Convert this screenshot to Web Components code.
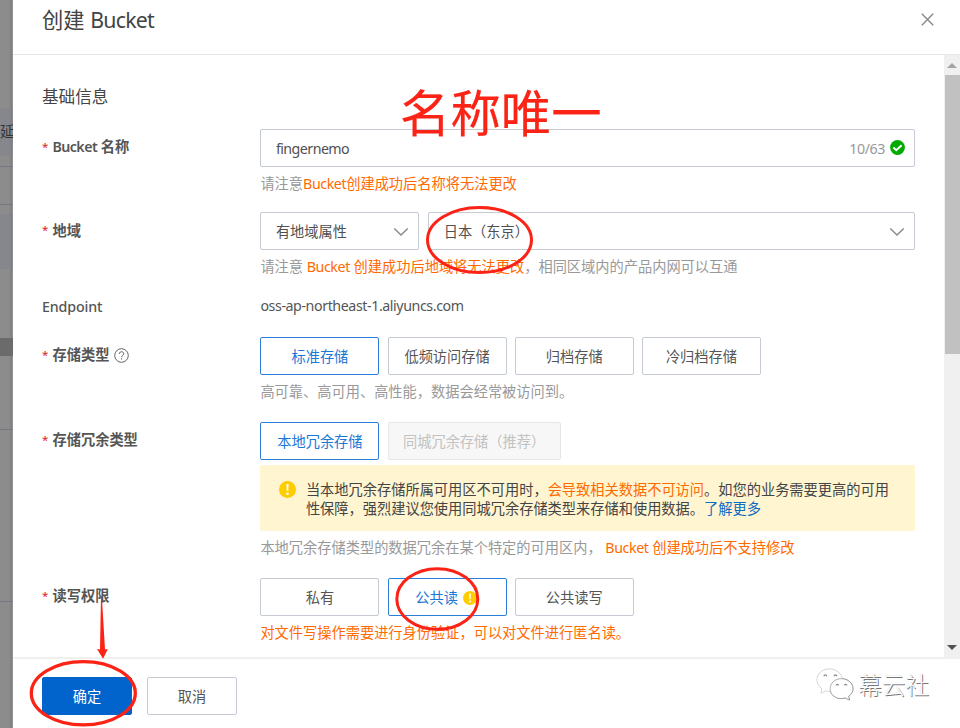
<!DOCTYPE html>
<html lang="zh-CN">
<head>
<meta charset="utf-8">
<title>创建 Bucket</title>
<style>
html,body{margin:0;width:960px;height:728px;overflow:hidden;background:#fff}
body{font:14.23px/20px "Noto Sans","Noto Sans CJK SC",sans-serif;color:#555;--latin:1em;--track:-.029em}
</style>
</head>
<body>
<bucket-page></bucket-page>
<script>
const define=(name,html)=>customElements.define(name,class extends HTMLElement{
  constructor(){super();const t=document.createElement('template');t.innerHTML=html;
    this.attachShadow({mode:'open'}).append(t.content.cloneNode(true));}
});

define('latin-text',`<style>:host{font-size:var(--latin);letter-spacing:var(--track,0)}</style><slot></slot>`);

define('warn-icon',`<style>:host{display:block;width:17px;height:17px}svg{display:block;width:100%;height:100%}</style>
<svg viewBox="0 0 17 17"><circle cx="8.5" cy="8.5" r="8.5" fill="#fc0"/><path d="M7.400 3h2.200l-.3 7H7.700z" fill="#fff"/><circle cx="8.500" cy="12.700" r="1.300" fill="#fff"/></svg>`);

define('form-row',`<style>
:host{display:grid;grid-template-columns:218.400px 654.600px;height:var(--h)}
.label{height:38px;margin-top:-1px;display:flex;align-items:center;font-weight:600;color:#555;white-space:nowrap}
:host([plain]) .label{height:20px;margin-top:1.500px;align-items:flex-start;font-weight:500}
i{display:none;font:400 11.500px/20px "Noto Sans",sans-serif;color:#e02020;width:10.500px}
:host([required]) i{display:block}
.help{display:none;margin-left:5px}
:host([help]) .help{display:block}
.body{display:flex;flex-direction:column}
</style><div class="label"><i>*</i><slot name="label"></slot><svg class="help" width="15" height="15" viewBox="0 0 15 15" fill="none" stroke="#666"><circle cx="7.500" cy="7.500" r="6.800"/><path d="M5.200 6c0-3 4.600-2.900 4.600-.2 0 1.800-2.200 1.600-2.200 3.400"/><path d="M7.600 10.200v1.300"/></svg></div><div class="body"><slot></slot></div>`);

define('button-group',`<style>:host{display:flex;gap:8.200px;height:38px}</style><slot></slot>`);

define('choice-button',`<style>
:host{box-sizing:border-box;display:flex;align-items:center;justify-content:center;width:119px;height:38px;border:1px solid #c5cad3;border-radius:2px;color:#555;padding-top:1px;white-space:nowrap;gap:5px}
:host([selected]){border-color:#2b7fd8;color:#1b78d6}
:host([disabled]){width:173px;background:#f7f7f7;border-color:#e6e6e6;color:#c2c2c2}
:host([dialog]){width:90px}
:host([primary]){background:#0064cc;border-color:#0064cc;color:#fff}
warn-icon{display:none;width:14px;height:14px}
:host([warn]) warn-icon{display:block}
:host([warn]){padding-right:2px}
</style><slot></slot><warn-icon></warn-icon>`);

define('field-box',`<style>
:host{box-sizing:border-box;display:flex;align-items:center;justify-content:space-between;flex:1;height:38px;border:1px solid #c5cad3;border-radius:2px;padding:1px 9px 0 14.500px;white-space:nowrap;color:#505050}
.end{display:flex;align-items:center;gap:5px;color:#999}
</style><span><slot></slot></span><span class="end"><slot name="end"></slot></span>`);

define('chevron-down',`<style>:host{display:block}svg{display:block}</style><svg width="16" height="10" viewBox="0 0 16 10" fill="none" stroke="#888" stroke-width="1.400"><path d="M1.300 1.400 8 8l6.700-6.600"/></svg>`);

define('ok-icon',`<style>:host{display:block;margin-top:-3px}svg{display:block}</style><svg width="15" height="15" viewBox="0 0 15 15"><circle cx="7.500" cy="7.500" r="7.400" fill="#0a0"/><path d="m3.300 7.400 3 2.800 5.300-5" fill="none" stroke="#fff" stroke-width="2"/></svg>`);

define('hint-text',`<style>
:host{display:block;height:20px;margin-top:7px;color:#999;white-space:nowrap}
:host([orange]){color:#ff6a00}
::slotted(b){font-weight:400;color:#ff6a00}
</style><slot></slot>`);

define('notice-box',`<style>
:host{box-sizing:border-box;display:flex;height:66px;margin-top:5px;padding:15px 20px 0 18.500px;background:#fff5d1;border-radius:2px;line-height:19.300px;color:#444;gap:10px}
warn-icon{margin-top:1px;flex:none}
p{margin:0;width:600px;white-space:nowrap}
::slotted(b){font-weight:400;color:#ff6a00}
::slotted(a){color:#0b6cc4}
</style><warn-icon></warn-icon><p><slot></slot></p>`);

define('page-backdrop',`<style>
:host{box-sizing:border-box;display:flex;flex-direction:column;width:13px;height:728px;background:linear-gradient(90deg,#8c8c8c 9px,#7c7c7c 12px,#aaa 13px);overflow:hidden;color:#333}
div{flex:none;box-sizing:border-box}
.band{background:#7e818c80}
.line{height:1px;background:#727780}
</style>
<div style="height:108px"></div><div class="band" style="height:48px;padding:14px 0 0 0;white-space:nowrap;line-height:20px">延</div>
<div style="height:10px"></div><div class="line"></div><div style="height:37px"></div><div class="line"></div><div style="height:9px"></div>
<div class="band" style="height:55px"></div><div style="height:69px"></div><div style="height:18px;background:#6b6b6b"></div><div style="height:73px"></div><div class="line"></div><div style="height:171px"></div><div class="line"></div>`);

define('scroll-bar',`<style>
:host{display:flex;flex-direction:column;width:16px;background:#f0f0f0}
.arrow{height:20px;display:flex;align-items:center;justify-content:center}
.thumb{height:279px;background:#c1c1c1;margin-left:1px}
.space{flex:1}
</style><div class="arrow"><svg width="10" height="5"><path d="M0 5 5 0l5 5z" fill="#a3a3a3"/></svg></div><div class="thumb"></div><div class="space"></div><div class="arrow"><svg width="10" height="5"><path d="M0 0h10L5 5z" fill="#505050"/></svg></div>`);

define('brand-mark',`<style>
:host{display:flex;align-items:center;gap:4px;font:300 23.700px/30px "Noto Sans CJK SC",sans-serif;color:#fff;text-shadow:1px 1px .6px #777,0 0 1px #ccc;white-space:nowrap}
svg{display:block;margin-top:-3px;filter:drop-shadow(.8px .8px .3px #888)}
span{margin-top:-4px}
</style><svg width="38" height="33" viewBox="0 0 39 34" fill="#fff" stroke="#ddd" stroke-width=".4"><path d="M14 1C6.600 1 1 6 1 12.300c0 3.800 2 6.800 5 9L5 26l5-2.700 4 .8c7.400 0 13-5 13-11.500S21 1 14 1Z"/><path d="M26 11c-6.500 0-11.500 4.500-11.500 10.300S19.500 31.500 26 31.500l4-.7 4.500 2.200-1-4c3-2 4.500-4.600 4.500-7.700C38 15.500 32.500 11 26 11Z" stroke="#999" stroke-width=".8"/><path d="M8 8.500c.4-1.800 2.600-1.800 3 0M18.500 8.500c.4-1.800 2.600-1.800 3 0M20.500 18c.4-1.600 2.500-1.600 2.900 0M29 18c.4-1.600 2.500-1.600 2.900 0" fill="none" stroke="#888" stroke-width="1.200"/></svg><span>幕云社</span>`);

define('mark-overlay',`<style>
:host{position:absolute;inset:0;display:block;pointer-events:none;color:#fb2216}
svg{position:absolute;inset:0}
span{position:absolute;left:400px;top:80.500px;font:400 50.400px/60px "Noto Sans CJK SC",sans-serif;white-space:nowrap;-webkit-text-stroke:.2px currentColor}
</style><span>名称唯一</span><svg width="960" height="728" fill="none" stroke="currentColor" stroke-width="3"><ellipse cx="479.500" cy="240" rx="52" ry="32.500"/><ellipse cx="437.300" cy="599" rx="40.500" ry="30.300"/><ellipse cx="83.300" cy="693.200" rx="52" ry="31.600" stroke-width="3.300"/><path d="M101 596h.8L105 649.500l2.800-.5-4.700 9.800L97 649l3 .5z" fill="currentColor" stroke="none"/></svg>`);

define('bucket-page',`<style>
:host{display:flex;position:relative;width:960px;height:728px}
main{flex:1;display:flex;flex-direction:column;background:#fff;min-width:0}
header{box-sizing:border-box;height:55px;border-bottom:1px solid #e6e6e6;display:flex;justify-content:space-between;padding:5px 26px 0 29px;font-size:21.300px;line-height:30px;color:#444}
header svg{margin-top:8px}
header latin-text{--track:-.035em}
.mid{display:flex;height:602px}
.form{flex:1;padding-left:29px}
h3{margin:0;font-weight:400;font-size:16.600px;line-height:24px;padding:30px 0 20px;color:#444}
footer{flex:1;box-sizing:border-box;border-top:2px solid #f0f0f0;display:flex;padding:18px 31px 0 29px;gap:15px}
brand-mark{margin:-6px 0 0 auto;height:30px}
.ep{line-height:20px;padding-top:1px}
</style>
<page-backdrop></page-backdrop>
<main>
<header><span>创建 <latin-text>Bucket</latin-text></span><svg width="13" height="13" viewBox="0 0 13 13" stroke="#888" stroke-width="1.400"><path d="m.8.8 11.400 11.400M12.200.8.8 12.200"/></svg></header>
<div class="mid"><div class="form">
<h3>基础信息</h3>
<form-row required style="--h:83px"><span slot="label"><latin-text style="--track:-.04em">Bucket</latin-text> 名称</span>
<field-box style="flex:none"><latin-text style="--track:-.038em">fingernemo</latin-text><latin-text slot="end">10/63</latin-text><ok-icon slot="end"></ok-icon></field-box>
<hint-text>请注意<b><latin-text>Bucket</latin-text>创建成功后名称将无法更改</b></hint-text></form-row>
<form-row required style="--h:83px"><span slot="label" style="padding-top:1px">地域</span>
<button-group><field-box style="flex:0 0 159px">有地域属性<chevron-down slot="end"></chevron-down></field-box><field-box style="margin-left:.6px">日本（东京）<chevron-down slot="end"></chevron-down></field-box></button-group>
<hint-text>请注意 <b><latin-text>Bucket</latin-text> 创建成功后地域将无法更改</b>，相同区域内的产品内网可以互通</hint-text></form-row>
<form-row plain style="--h:42px"><latin-text slot="label" style="--track:-.01em">Endpoint</latin-text><div class="ep"><latin-text>oss-ap-northeast-1.aliyuncs.com</latin-text></div></form-row>
<form-row required help style="--h:85px"><span slot="label">存储类型</span>
<button-group><choice-button selected>标准存储</choice-button><choice-button>低频访问存储</choice-button><choice-button>归档存储</choice-button><choice-button>冷归档存储</choice-button></button-group>
<hint-text>高可靠、高可用、高性能，数据会经常被访问到。</hint-text></form-row>
<form-row required style="--h:156px"><span slot="label">存储冗余类型</span>
<button-group><choice-button selected>本地冗余存储</choice-button><choice-button disabled>同城冗余存储（推荐）</choice-button></button-group>
<notice-box>当本地冗余存储所属可用区不可用时，<b>会导致相关数据不可访问</b>。如您的业务需要更高的可用<br>性保障，强烈建议您使用同城冗余存储类型来存储和使用数据。<a>了解更多</a></notice-box>
<hint-text>本地冗余存储类型的数据冗余在某个特定的可用区内， <b><latin-text>Bucket</latin-text> 创建成功后不支持修改</b></hint-text></form-row>
<form-row required style="--h:79px"><span slot="label">读写权限</span>
<button-group><choice-button>私有</choice-button><choice-button selected warn>公共读</choice-button><choice-button>公共读写</choice-button></button-group>
<hint-text orange>对文件写操作需要进行身份验证，可以对文件进行匿名读。</hint-text></form-row>
</div><scroll-bar></scroll-bar></div>
<footer><choice-button dialog primary>确定</choice-button><choice-button dialog>取消</choice-button><brand-mark></brand-mark></footer>
</main>
<mark-overlay></mark-overlay>`);
</script>
</body>
</html>
